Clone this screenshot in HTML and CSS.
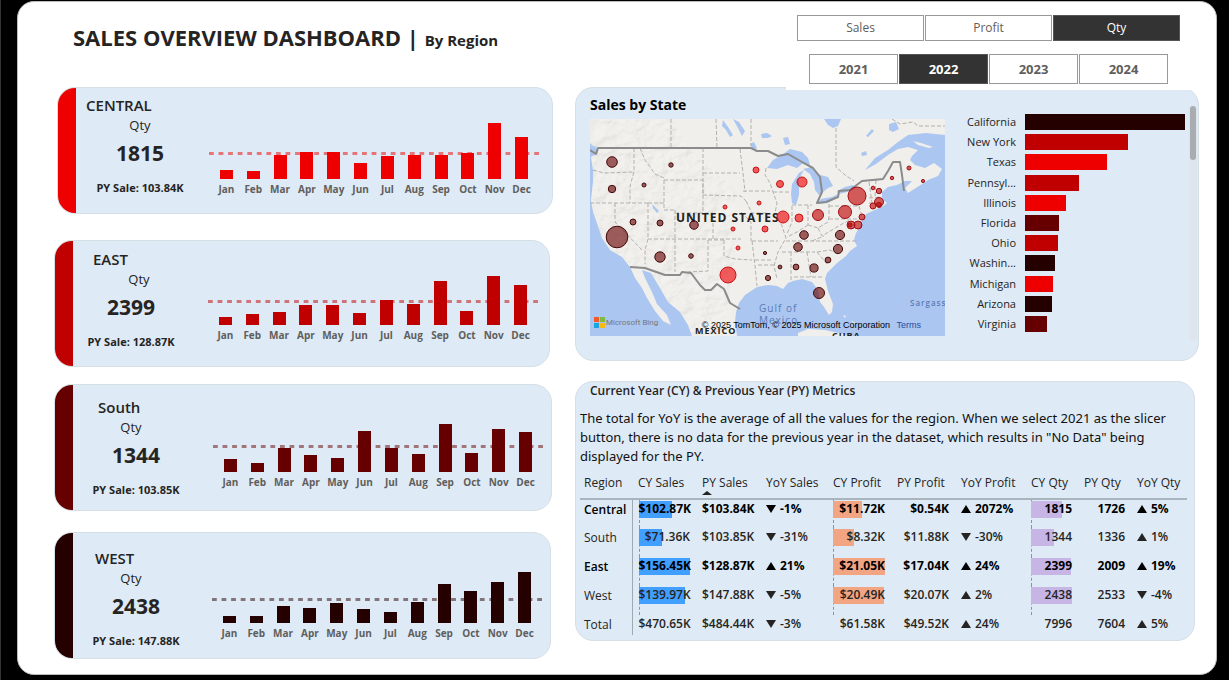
FILE: index.html
```html
<!DOCTYPE html>
<html lang="en">
<head>
<meta charset="utf-8">
<title>Sales Overview Dashboard</title>
<meta name="viewport" content="width=device-width, initial-scale=1">
<link rel="stylesheet" href="styles.css">
</head>
<body>
<div class="page">
  <header class="header">
    <h1 class="title">SALES OVERVIEW DASHBOARD <span class="title-sep">|</span> <span class="title-sub">By Region</span></h1>
    <div class="slicers">
      <div class="slicer slicer-measure">
        <button type="button">Sales</button>
        <button type="button">Profit</button>
        <button type="button" class="is-on" aria-pressed="true">Qty</button>
      </div>
      <div class="slicer slicer-year">
        <button type="button">2021</button>
        <button type="button" class="is-on" aria-pressed="true">2022</button>
        <button type="button">2023</button>
        <button type="button">2024</button>
      </div>
    </div>
  </header>

  <main class="main">
    <div class="regions">
      <section class="card region central">
        <div class="strip"></div>
        <div class="info">
          <h2>CENTRAL</h2>
          <p class="measure">Qty</p>
          <p class="value">1815</p>
          <p class="previous">PY Sale: 103.84K</p>
        </div>
        <div class="chart">
          <div class="plot">
            <svg class="average"><line x1="0" y1="50%" x2="100%" y2="50%" pathLength="69"/></svg>
            <div class="bars">
              <i style="height:9px"></i><i style="height:8px"></i><i style="height:24px"></i><i style="height:27px"></i><i style="height:27px"></i><i style="height:16px"></i><i style="height:23px"></i><i style="height:24px"></i><i style="height:24px"></i><i style="height:26px"></i><i style="height:56px"></i><i style="height:42px"></i>
            </div>
          </div>
          <div class="months"><span>Jan</span><span>Feb</span><span>Mar</span><span>Apr</span><span>May</span><span>Jun</span><span>Jul</span><span>Aug</span><span>Sep</span><span>Oct</span><span>Nov</span><span>Dec</span></div>
        </div>
      </section>

      <section class="card region east">
        <div class="strip"></div>
        <div class="info">
          <h2>EAST</h2>
          <p class="measure">Qty</p>
          <p class="value">2399</p>
          <p class="previous">PY Sale: 128.87K</p>
        </div>
        <div class="chart">
          <div class="plot">
            <svg class="average"><line x1="0" y1="50%" x2="100%" y2="50%" pathLength="69"/></svg>
            <div class="bars">
              <i style="height:8px"></i><i style="height:11px"></i><i style="height:13px"></i><i style="height:20px"></i><i style="height:20px"></i><i style="height:12px"></i><i style="height:25px"></i><i style="height:21px"></i><i style="height:44px"></i><i style="height:14px"></i><i style="height:49px"></i><i style="height:40px"></i>
            </div>
          </div>
          <div class="months"><span>Jan</span><span>Feb</span><span>Mar</span><span>Apr</span><span>May</span><span>Jun</span><span>Jul</span><span>Aug</span><span>Sep</span><span>Oct</span><span>Nov</span><span>Dec</span></div>
        </div>
      </section>

      <section class="card region south">
        <div class="strip"></div>
        <div class="info">
          <h2>South</h2>
          <p class="measure">Qty</p>
          <p class="value">1344</p>
          <p class="previous">PY Sale: 103.85K</p>
        </div>
        <div class="chart">
          <div class="plot">
            <svg class="average"><line x1="0" y1="50%" x2="100%" y2="50%" pathLength="69"/></svg>
            <div class="bars">
              <i style="height:13px"></i><i style="height:9px"></i><i style="height:24px"></i><i style="height:17px"></i><i style="height:14px"></i><i style="height:41px"></i><i style="height:24px"></i><i style="height:18px"></i><i style="height:48px"></i><i style="height:19px"></i><i style="height:43px"></i><i style="height:40px"></i>
            </div>
          </div>
          <div class="months"><span>Jan</span><span>Feb</span><span>Mar</span><span>Apr</span><span>May</span><span>Jun</span><span>Jul</span><span>Aug</span><span>Sep</span><span>Oct</span><span>Nov</span><span>Dec</span></div>
        </div>
      </section>

      <section class="card region west">
        <div class="strip"></div>
        <div class="info">
          <h2>WEST</h2>
          <p class="measure">Qty</p>
          <p class="value">2438</p>
          <p class="previous">PY Sale: 147.88K</p>
        </div>
        <div class="chart">
          <div class="plot">
            <svg class="average"><line x1="0" y1="50%" x2="100%" y2="50%" pathLength="69"/></svg>
            <div class="bars">
              <i style="height:7px"></i><i style="height:7px"></i><i style="height:17px"></i><i style="height:15px"></i><i style="height:20px"></i><i style="height:14px"></i><i style="height:11px"></i><i style="height:21px"></i><i style="height:39px"></i><i style="height:32px"></i><i style="height:41px"></i><i style="height:51px"></i>
            </div>
          </div>
          <div class="months"><span>Jan</span><span>Feb</span><span>Mar</span><span>Apr</span><span>May</span><span>Jun</span><span>Jul</span><span>Aug</span><span>Sep</span><span>Oct</span><span>Nov</span><span>Dec</span></div>
        </div>
      </section>
    </div>

    <div class="details">
      <section class="card states">
        <div class="map-block">
          <h2>Sales by State</h2>
          <div class="map">
            <svg viewBox="590 119 355 217" role="img" aria-label="Map of quantity by state">
              <defs>
                <filter id="relief" x="0" y="0" width="100%" height="100%">
                  <feTurbulence type="fractalNoise" baseFrequency="0.07 0.09" numOctaves="4" seed="8" result="n"/>
                  <feDiffuseLighting in="n" surfaceScale="4" diffuseConstant="1" lighting-color="#ffffff"><feDistantLight azimuth="220" elevation="60"/></feDiffuseLighting>
                </filter>
                <clipPath id="land-clip">
                  <path d="M590 119H672L690 150L735 190V262L722 336H692L688 325L680 312L668 302L660 288L651 273L642 270L630 267L622 257L610 250L602 238L597 223L593 212L591 200L593 182L593 170L591 157L598 150L590 146Z"/>
                </clipPath>
              </defs>
              <rect x="590" y="119" width="355" height="217" fill="#abc6f1"/>
              <path fill="#f0efeb" d="M590 119H945V135L926 133L908 135L898 142L888 150L875 158L865 170L876 164L888 155L898 149L908 147L918 150L912 156L910 160L915 165L925 168L934 163L942 169L938 176L928 180L919 186L908 193L905 188L912 181L905 181L897 185L888 187L882 192L882 199L887 203L883 206L877 209L866 214L862 220L860 227L856 233L854 240L857 246L850 251L846 256L837 263L827 273L825 279L828 291L833 304L832 312L829 315L824 307L820 302L818 290L812 282L802 279L793 281L788 283L783 289L777 286L768 285L757 287L745 295L739 303L736 312L735 322L737 336H692L688 325L680 312L668 302L660 288L651 273L642 270L645 278L652 292L657 304L667 315L671 325L663 321L655 311L647 298L642 288L635 278L630 267L622 257L610 250L602 238L597 223L593 212L591 200L593 182L593 170L591 157L598 153L598 148L592 145L590 143Z"/>
              <rect x="590" y="119" width="170" height="217" clip-path="url(#land-clip)" filter="url(#relief)" opacity=".16"/>
              <g fill="#abc6f1">
                <path d="M767 168L773 160L782 155L790 149L802 152L808 158L810 165L802 164L797 168L788 165L777 169Z"/>
                <path d="M792 184L799 173L804 170L799 179L799 195L796 205L792 203L791 194Z"/>
                <path d="M803 169L812 167L820 175L828 177L833 186L828 188L823 192L819 195L815 190L814 182L810 174Z"/>
                <path d="M817 204L821 199L832 197L838 194L835 199L828 203Z"/>
                <path d="M837 191L845 187L853 185L855 189L847 192L839 194Z"/>
                <path d="M750 144L754 142L757 148L753 150Z"/>
                <path d="M723 120L728 127L733 135L730 137L726 130L722 126ZM733 119L739 122L745 131L742 136L738 128Z"/>
                <path d="M761 134L767 133L772 136L768 138L762 138ZM783 138L788 137L790 144L785 145Z"/>
                <path d="M824 119H841L838 126L833 128L828 125Z"/>
                <path d="M866 136L872 129L874 131L868 137ZM889 124L896 122L899 129L893 132L889 130ZM861 153L866 151L867 155L862 156Z"/>
                <path d="M652 204L655 207L659 211L657 213L653 208Z"/>
              </g>
              <path fill="#f0efeb" d="M913 141L921 143L933 147L929 148L918 145ZM798 333L808 329L825 330L843 334L848 336H798ZM843 315L846 316L845 318ZM851 320L856 324L853 323Z"/>
              <g class="state-lines">
                <path d="M671 119V148M716 119L717 148M751 119V146M836 128V167L845 175L854 181M634 148V172L630 186V203M593 170L604 173L634 172M590 203H648M615 203V222L642 250M648 203V239L645 250V264M648 239H741M648 203L664 203M640 148L645 160L655 174L664 178M664 180V210H675M664 180H703V213M703 148V195M703 173L740 173M703 195L741 196L746 201M675 210V239M675 213H713V239M675 239V272M708 240V271L688 272M724 240V256L735 259L752 260M741 212L751 222V241M740 149L743 173L745 192M743 191H770M746 201L752 213H768M708 240H724M752 241L755 266L757 286M752 241H778M755 260H772M758 265H774M766 168L765 175L770 183L773 192L777 203L775 213L782 226L786 238L778 252L774 266L777 279M773 192H790M792 206V222L787 234M808 205V225M792 205H812M829 204V217M829 206H859M829 219H858M786 241H858M782 252L815 252M808 225L797 232L787 237M808 225L818 228L828 222L829 217M818 228L822 236L842 224L850 220M812 241L824 236M791 252V280M807 252L811 277M794 277H822M817 252L827 264M817 252L830 250L838 254M869 182L872 203M876 180L875 197M869 198L880 197M869 203H881M859 206L862 217M892 119L900 124L913 122L918 126L945 126"/>
              </g>
              <path class="country-lines" d="M590 150L596 154L598 148H751L757 151L768 151L778 156L788 154L802 162L813 168L820 177L822 192L817 203L826 202L838 197L839 191L850 190L862 181L883 179L888 171L893 162L900 162L902 175L904 191M630 267L645 268L665 275L680 275L682 272L691 273L700 285L705 290L711 290L717 284L724 289L730 303L740 309"/>
              <g class="places">
                <text x="676" y="222" class="country">UNITED STATES</text>
                <text x="695" y="334" class="country-small">MEXICO</text>
                <text x="832" y="339" class="country-small">CUBA</text>
                <text x="759" y="312" class="sea">Gulf of</text>
                <text x="759" y="324" class="sea">Mexico</text>
                <text x="910" y="306" class="sea-small">Sargass</text>
              </g>
              <g class="dots dots-central">
                <circle cx="756" cy="170" r="3"/><circle cx="725" cy="207" r="2"/><circle cx="759" cy="203" r="2"/><circle cx="733" cy="229" r="2"/><circle cx="765" cy="229" r="3"/><circle cx="738" cy="248" r="2"/><circle cx="728" cy="275" r="8"/><circle cx="780" cy="184" r="3.5"/><circle cx="802" cy="182" r="5"/><circle cx="783" cy="217" r="6"/><circle cx="799" cy="218" r="4"/>
              </g>
              <g class="dots dots-east">
                <circle cx="818" cy="215" r="5.5"/><circle cx="845" cy="212" r="6.5"/><circle cx="857" cy="196" r="9"/><circle cx="862" cy="217" r="3"/><circle cx="858" cy="225" r="4"/><circle cx="851" cy="225" r="4"/><circle cx="850" cy="225" r="2"/><circle cx="879" cy="202" r="4.5"/><circle cx="873" cy="206" r="3"/><circle cx="879" cy="205" r="2.5"/><circle cx="879" cy="191" r="2.7"/><circle cx="873" cy="188" r="1.8"/><circle cx="892" cy="178" r="1.7"/><circle cx="909" cy="168" r="2"/><circle cx="923" cy="181" r="1.6"/>
              </g>
              <g class="dots dots-south">
                <circle cx="765" cy="253" r="1.6"/><circle cx="768" cy="278" r="2.6"/><circle cx="780" cy="267" r="1.9"/><circle cx="796" cy="267" r="2.9"/><circle cx="814" cy="268" r="4.1"/><circle cx="828" cy="260" r="2.9"/><circle cx="838" cy="249" r="4.6"/><circle cx="840" cy="235" r="4.6"/><circle cx="804" cy="235" r="4.3"/><circle cx="798" cy="247" r="4.3"/><circle cx="819" cy="293" r="5.5"/>
              </g>
              <g class="dots dots-west">
                <circle cx="612" cy="162" r="5.3"/><circle cx="612" cy="189" r="3.7"/><circle cx="671" cy="165" r="2.2"/><circle cx="644" cy="185" r="2"/><circle cx="617" cy="237" r="10.8"/><circle cx="633" cy="222" r="3"/><circle cx="660" cy="223" r="3"/><circle cx="694" cy="225" r="4.3"/><circle cx="660" cy="257" r="5.2"/><circle cx="691" cy="256" r="2.3"/>
              </g>
              <path fill="#f1592a" d="M594 317h5v5h-5z"/><path fill="#7fba42" d="M600 317h5v5h-5z"/><path fill="#19a5e1" d="M594 323h5v5h-5z"/><path fill="#fdb913" d="M600 323h5v5h-5z"/>
              <text x="606" y="325" class="bing">Microsoft Bing</text>
            </svg>
            <p class="credits">© 2025 TomTom, © 2025 Microsoft Corporation <a href="#terms">Terms</a></p>
          </div>
        </div>
        <ul class="ranking">
          <li class="west"><span>California</span><b><i style="width:100%"></i></b></li>
          <li class="east"><span>New York</span><b><i style="width:64.6%"></i></b></li>
          <li class="central"><span>Texas</span><b><i style="width:51.5%"></i></b></li>
          <li class="east"><span>Pennsyl...</span><b><i style="width:33.5%"></i></b></li>
          <li class="central"><span>Illinois</span><b><i style="width:25.5%"></i></b></li>
          <li class="south"><span>Florida</span><b><i style="width:21%"></i></b></li>
          <li class="east"><span>Ohio</span><b><i style="width:20.4%"></i></b></li>
          <li class="west"><span>Washin...</span><b><i style="width:18.5%"></i></b></li>
          <li class="central"><span>Michigan</span><b><i style="width:17.2%"></i></b></li>
          <li class="west"><span>Arizona</span><b><i style="width:16.7%"></i></b></li>
          <li class="south"><span>Virginia</span><b><i style="width:13.6%"></i></b></li>
        </ul>
        <div class="scroll"><div class="thumb"></div></div>
      </section>

      <section class="card metrics">
        <h2>Current Year (CY) &amp; Previous Year (PY) Metrics</h2>
        <p class="note">The total for YoY is the average of all the values for the region. When we select 2021 as the slicer button, there is no data for the previous year in the dataset, which results in "No Data" being displayed for the PY.</p>
        <table>
          <colgroup><col class="c-region"><col class="c-money"><col class="c-money"><col class="c-yoy"><col class="c-money"><col class="c-money"><col class="c-yoy-wide"><col class="c-qty"><col class="c-qty"><col class="c-last"></colgroup>
          <thead>
            <tr><th>Region</th><th>CY Sales</th><th class="sorted">PY Sales</th><th>YoY Sales</th><th>CY Profit</th><th>PY Profit</th><th>YoY Profit</th><th>CY Qty</th><th>PY Qty</th><th>YoY Qty</th></tr>
          </thead>
          <tbody>
            <tr class="strong"><th scope="row">Central</th><td class="bar blue"><div><i style="width:65.7%"></i><span>$102.87K</span></div></td><td>$103.84K</td><td class="yoy"><i class="down"></i>-1%</td><td class="bar orange"><div><i style="width:55.7%"></i><span>$11.72K</span></div></td><td>$0.54K</td><td class="yoy"><i class="up"></i>2072%</td><td class="bar purple"><div><i style="width:74.4%"></i><span>1815</span></div></td><td>1726</td><td class="yoy"><i class="up"></i>5%</td></tr>
            <tr><th scope="row">South</th><td class="bar blue"><div><i style="width:45.6%"></i><span>$71.36K</span></div></td><td>$103.85K</td><td class="yoy"><i class="down"></i>-31%</td><td class="bar orange"><div><i style="width:39.5%"></i><span>$8.32K</span></div></td><td>$11.88K</td><td class="yoy"><i class="down"></i>-30%</td><td class="bar purple"><div><i style="width:55.1%"></i><span>1344</span></div></td><td>1336</td><td class="yoy"><i class="up"></i>1%</td></tr>
            <tr class="strong"><th scope="row">East</th><td class="bar blue"><div><i style="width:100%"></i><span>$156.45K</span></div></td><td>$128.87K</td><td class="yoy"><i class="up"></i>21%</td><td class="bar orange"><div><i style="width:100%"></i><span>$21.05K</span></div></td><td>$17.04K</td><td class="yoy"><i class="up"></i>24%</td><td class="bar purple"><div><i style="width:98.4%"></i><span>2399</span></div></td><td>2009</td><td class="yoy"><i class="up"></i>19%</td></tr>
            <tr><th scope="row">West</th><td class="bar blue"><div><i style="width:89.5%"></i><span>$139.97K</span></div></td><td>$147.88K</td><td class="yoy"><i class="down"></i>-5%</td><td class="bar orange"><div><i style="width:97.3%"></i><span>$20.49K</span></div></td><td>$20.07K</td><td class="yoy"><i class="up"></i>2%</td><td class="bar purple"><div><i style="width:100%"></i><span>2438</span></div></td><td>2533</td><td class="yoy"><i class="down"></i>-4%</td></tr>
          </tbody>
          <tfoot>
            <tr><th scope="row">Total</th><td>$470.65K</td><td>$484.44K</td><td class="yoy"><i class="down"></i>-3%</td><td>$61.58K</td><td>$49.52K</td><td class="yoy"><i class="up"></i>24%</td><td>7996</td><td>7604</td><td class="yoy"><i class="up"></i>5%</td></tr>
          </tfoot>
        </table>
      </section>
    </div>
  </main>
</div>
</body>
</html>
```
FILE: styles.css
```css
* { box-sizing: border-box; }

body {
  margin: 0;
  min-height: 100vh;
  padding: 1px 12px 6px 16px;
  border-left: 1px solid #333;
  background: #000;
  color: #252423;
  font-family: "Open Sans", "Noto Sans", sans-serif;
  font-size: 12px;
}

h1, h2, p, ul { margin: 0; padding: 0; }
i, b { font-style: normal; font-weight: inherit; }

.page {
  padding: 13px 17px 15px 36px;
  border: 1px solid #bbb;
  border-radius: 17px;
  background: #fff;
}

/* Header */
.header {
  display: flex;
  justify-content: space-between;
  align-items: flex-start;
}
.title {
  padding: 7px 0 0 19px;
  font-size: 22px;
  line-height: 30px;
  font-weight: 700;
}
.title-sub { font-size: 15px; }

.slicers {
  position: relative;
  z-index: 1;
  display: flex;
  flex-direction: column;
  align-items: flex-start;
  gap: 13px;
  width: 413px;
  margin-bottom: -3px;
  padding: 0 0 6px 11px;
  background: #fff;
}
.slicer { display: flex; gap: 1px; }
.slicer-year { padding-left: 12px; }
.slicer button {
  padding: 0;
  border: 1px solid #999;
  background: #fff;
  color: #605e5c;
  font: 12px/18px "Open Sans", "Noto Sans", sans-serif;
}
.slicer-measure button { width: 127px; height: 26px; }
.slicer-year button { width: 89px; height: 30px; font-size: 13px; font-weight: 700; }
.slicer button.is-on { border-color: #555; background: #333; color: #fff; }

/* Layout */
.main {
  display: grid;
  grid-template-columns: minmax(0, 499fr) minmax(0, 624fr);
  gap: 22px;
  align-items: start;
}
.card {
  border: 1px solid #d5dfe6;
  border-radius: 18px;
  background: #deeaf5;
}

/* Region cards */
.central { --tone: #ee0000; }
.east { --tone: #c00000; }
.south { --tone: #660000; }
.west { --tone: #250000; }

.region {
  display: grid;
  grid-template-columns: 18px var(--info) minmax(0, 1fr);
  height: 127px;
  overflow: hidden;
}
.region.central { --info: 128px; --lead: 7px; --chart-lead: 31px; --average: 24px; margin-left: 3px; }
.region.east { --info: 116px; --lead: 8px; --chart-lead: 24px; --average: 22px; margin: 26px 3px 0 0; }
.region.south { --info: 126px; --lead: 12px; --chart-lead: 27px; --average: 24px; margin: 17px 1px 0 0; }
.region.west { --info: 126px; --lead: 15px; --chart-lead: 30px; --average: 22px; margin: 21px 2px 0 0; }

.strip { background: var(--tone); }
.info { padding-top: var(--lead); text-align: center; }
.info h2 {
  padding-left: 10px;
  font-size: 15px;
  line-height: 20px;
  font-weight: 600;
  text-align: left;
}
.east .info h2 { padding-left: 20px; }
.south .info h2 { padding-left: 25px; }
.west .info h2 { padding-left: 22px; }
.measure { font-size: 13px; line-height: 20px; }
.east .measure { padding-left: 16px; }
.south .measure, .west .measure { padding-right: 10px; }
.value { font-size: 21px; line-height: 36px; font-weight: 700; }
.previous { padding-top: 9px; font-size: 11px; line-height: 16px; font-weight: 700; }

.chart { padding: var(--chart-lead) 13px 0 5px; }
.region.east .chart { padding-left: 19px; padding-right: 11px; }
.region.south .chart { padding-left: 14px; padding-right: 8px; }
.region.west .chart { padding-left: 13px; padding-right: 8px; }
.plot { position: relative; height: 60px; }
.average {
  position: absolute;
  left: 0;
  bottom: var(--average);
  width: 100%;
  height: 3px;
}
.average line { stroke: var(--tone); stroke-width: 3; stroke-dasharray: 1 1; opacity: .5; }
.bars, .months {
  display: grid;
  grid-template-columns: repeat(12, minmax(0, 1fr));
  padding: 0 4px;
}
.bars { position: relative; height: 100%; align-items: end; justify-items: center; }
.bars i { width: 13px; background: var(--tone); }
.months {
  padding-top: 3px;
  color: #605e5c;
  font-size: 10px;
  line-height: 14px;
  font-weight: 700;
}
.months span { display: flex; justify-content: center; white-space: nowrap; }

/* Map card */
.states {
  display: grid;
  grid-template-columns: minmax(0, 355fr) minmax(0, 244fr) 8px;
  height: 274px;
  padding: 7px 1px 0 14px;
}
.states h2 { color: #000; font-size: 14px; line-height: 20px; font-weight: 700; }
.map { position: relative; margin-top: 4px; }
.map svg { display: block; width: 100%; }
.state-lines { fill: none; stroke: #b3b1ae; stroke-width: 1; stroke-dasharray: 4 2; }
.country-lines { fill: none; stroke: #8b8b8b; stroke-width: 2; stroke-linejoin: round; }
.dots { fill-opacity: .62; stroke-width: 1; }
.dots-central { fill: #ee0000; stroke: #c81418; }
.dots-east { fill: #c00000; stroke: #a00d12; }
.dots-south, .dots-west { fill: #660000; stroke: #45090c; }
.country { font-size: 12px; font-weight: 700; letter-spacing: 1px; fill: #222; }
.country-small { font-size: 9px; font-weight: 700; fill: #222; letter-spacing: 1px; }
.sea { font-size: 10px; fill: #5a7cb8; letter-spacing: 1px; }
.sea-small { font-size: 8px; font-weight: 600; fill: #5a7cb8; letter-spacing: 1px; }
.bing { font: 8px Roboto, sans-serif; fill: #777; }
.credits {
  position: absolute;
  right: 24px;
  bottom: 4px;
  color: #000;
  font: 9px/14px "Liberation Sans", sans-serif;
  white-space: nowrap;
}
.credits a { margin-left: 4px; color: #2a4aa0; text-decoration: none; }

.ranking {
  display: grid;
  grid-auto-rows: 1fr;
  height: 222px;
  margin: 17px 4px 0 0;
  list-style: none;
}
.ranking li {
  display: grid;
  grid-template-columns: 71px minmax(0, 1fr);
  gap: 9px;
  align-items: center;
  color: #252423;
  font-size: 11px;
  line-height: 16px;
}
.ranking span { text-align: right; }
.ranking b { display: block; height: 16px; }
.ranking b i { display: block; height: 100%; background: var(--tone); }

.scroll {
  height: 235px;
  margin-top: 11px;
  padding: 0 1px;
  border-radius: 4px;
  background: #e0e4ec;
}
.thumb { height: 54px; border-radius: 3px; background: #a9adb2; }

/* Metrics card */
.metrics { height: 260px; margin: 20px 4px 0 0; padding: 0 9px 0 4px; }
.metrics h2 { padding-left: 10px; font-size: 12px; line-height: 18px; font-weight: 600; }
.note {
  padding-top: 9px;
  color: #111;
  font-family: "Noto Sans", "Open Sans", sans-serif;
  font-size: 13px;
  line-height: 19px;
}

table { width: 100%; margin-top: 7px; border-collapse: collapse; table-layout: fixed; }
.c-region { width: 52px; }
.c-money { width: 64px; }
.c-yoy { width: 67px; }
.c-yoy-wide { width: 70px; }
.c-qty { width: 53px; }
.c-last { width: 56px; }
th, td { padding: 0 6px; white-space: nowrap; }
thead th {
  position: relative;
  height: 26px;
  padding-bottom: 5px;
  border-bottom: 2px solid #a9b4bd;
  font-size: 12px;
  font-weight: 400;
  line-height: 16px;
  text-align: left;
}
th:first-child { padding-left: 4px; }
.sorted::after {
  content: "";
  position: absolute;
  left: 6px;
  bottom: 3px;
  border: 5px solid transparent;
  border-top: 0;
  border-bottom: 4px solid #252423;
}
tbody th, tfoot th {
  padding-top: 1px;
  border-right: 1px solid #a0a8b0;
  font-weight: 400;
  line-height: 17px;
  text-align: left;
}
tbody tr { height: 29px; }
tfoot tr { height: 20px; }
tbody td, tbody th, tfoot td, tfoot th { vertical-align: top; }
td { font-size: 12px; font-weight: 600; text-align: right; line-height: 17px; }
.strong td { color: #000; font-weight: 700; }
.strong th { color: #000; font-weight: 600; }
.yoy { text-align: left; }
.yoy i {
  display: inline-block;
  margin-right: 4px;
  border: 5px solid transparent;
}
.yoy .up { border-top: 0; border-bottom: 8px solid currentColor; }
.yoy .down { border-bottom: 0; border-top: 8px solid currentColor; }

.bar { position: relative; }
.bar::before {
  content: "";
  position: absolute;
  top: 0;
  bottom: 0;
  left: 6px;
  border-left: 1px dashed #8c959e;
}
.bar div { position: relative; height: 17px; }
.bar i { position: absolute; left: 0; top: 1px; height: 17px; background: var(--bar); }
.bar span { position: relative; }
.blue { --bar: #419fff; }
.orange { --bar: #f2a582; }
.purple { --bar: #c7b5e6; }
```
